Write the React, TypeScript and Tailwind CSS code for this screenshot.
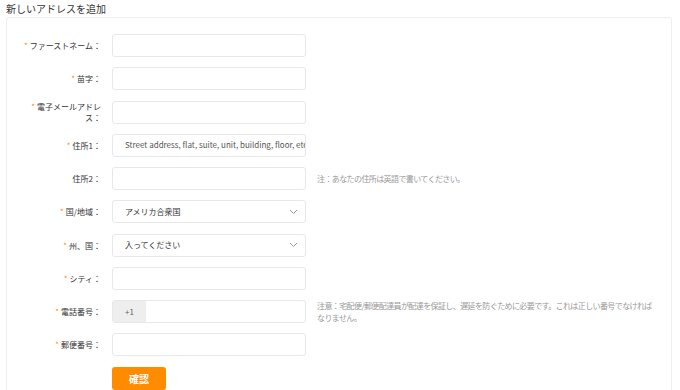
import React from "react";

const font = { fontFamily: '"Noto Sans CJK JP", "Noto Sans", sans-serif' };

function Label({ required, children }: { required?: boolean; children: React.ReactNode }) {
  return (
    <div className="w-[94px] shrink-0 text-right text-[8px] leading-[11px] text-[#333]">
      {required && <span className="text-[#ff8c00] mr-[2px]">*</span>}
      {children}
    </div>
  );
}

function Chevron() {
  return (
    <svg width="9" height="6" viewBox="0 0 9 6" className="shrink-0">
      <path d="M1 1l3.5 3.5L8 1" fill="none" stroke="#999" strokeWidth="1" />
    </svg>
  );
}

function Row({
  label,
  required,
  children,
  note,
}: {
  label: React.ReactNode;
  required?: boolean;
  children?: React.ReactNode;
  note?: React.ReactNode;
}) {
  return (
    <div className="flex items-center h-[23px]">
      <Label required={required}>{label}</Label>
      <div className="ml-[11px] w-[194px] h-[23px] shrink-0 rounded-[3px] border border-[#e8e8e8] bg-white flex items-center overflow-hidden">
        {children}
      </div>
      {note && (
        <div className="ml-[11px] text-[8px] leading-[12px] tracking-[-0.6px] text-[#999] whitespace-nowrap">
          {note}
        </div>
      )}
    </div>
  );
}

export default function App() {
  return (
    <div className="w-[680px] h-[390px] bg-white overflow-hidden" style={font}>
      <div className="pl-[6px] pt-[2px] text-[10px] leading-[13px] text-[#333]">新しいアドレスを追加</div>
      <div className="ml-[6px] mr-[8px] mt-[2px] h-[400px] border border-[#eeeeee] rounded-[3px] pt-[16px] flex flex-col gap-[10.25px]">
        <Row label="ファーストネーム：" required />
        <Row label="苗字：" required />
        <Row
          required
          label={
            <>
              電子メールアドレ
              <br />
              ス：
            </>
          }
        />
        <Row label="住所1：" required>
          <span className="pl-[12px] text-[8px] text-[#555] whitespace-nowrap">
            Street address, flat, suite, unit, building, floor, etc.
          </span>
        </Row>
        <Row label="住所2：" note="注：あなたの住所は英語で書いてください。" />
        <Row label="国/地域：" required>
          <span className="pl-[12px] text-[8px] text-[#333] flex-1">アメリカ合衆国</span>
          <span className="pr-[7px]"><Chevron /></span>
        </Row>
        <Row label="州、国：" required>
          <span className="pl-[12px] text-[8px] text-[#333] flex-1">入ってください</span>
          <span className="pr-[7px]"><Chevron /></span>
        </Row>
        <Row label="シティ：" required />
        <Row
          label="電話番号："
          required
          note={
            <>
              注意：宅配便/郵便配達員が配達を保証し、遅延を防ぐために必要です。これは正しい番号でなければ
              <br />
              なりません。
            </>
          }
        >
          <div className="w-[33px] h-full bg-[#eeeeee] flex items-center justify-center text-[8px] text-[#666]">+1</div>
        </Row>
        <Row label="郵便番号：" required />
        <div className="flex">
          <div className="w-[94px] shrink-0" />
          <button className="ml-[11px] w-[54px] h-[23px] rounded-[3px] bg-[#ff8c00] text-white text-[10px] font-bold">
            確認
          </button>
        </div>
      </div>
    </div>
  );
}
